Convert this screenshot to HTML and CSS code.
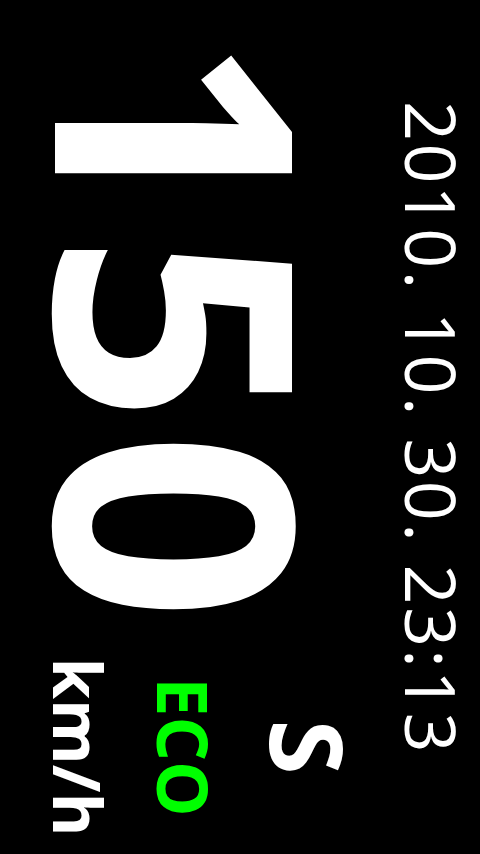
FILE: index.html
```html
<!DOCTYPE html>
<html>
<head>
<meta charset="utf-8">
<link rel="stylesheet" href="styles.css">
</head>
<body>
<div class="screen">
  <div class="date">2010. 10. 30. 23:13</div>
  <div class="main">
    <div class="speed">150</div>
    <div class="side">
      <div class="gear">S</div>
      <div class="eco">ECO</div>
      <div class="unit">km/h</div>
    </div>
  </div>
</div>
</body>
</html>
```
FILE: styles.css
```css
html, body {
  margin: 0;
  padding: 0;
  background: #000;
  width: 480px;
  height: 854px;
  overflow: hidden;
}
.screen {
  width: 854px;
  height: 480px;
  background: #000;
  color: #fff;
  font-family: "Open Sans", "DejaVu Sans", sans-serif;
  transform-origin: 0 0;
  transform: translateX(480px) rotate(90deg);
  display: flex;
  flex-direction: column;
}
.date {
  font-size: 70px;
  line-height: 1;
  padding-top: 13px;
  padding-left: 2px;
  letter-spacing: 2.4px;
  text-align: center;
  white-space: nowrap;
}
.main {
  display: flex;
  align-items: flex-start;
}
.speed {
  font-size: 332px;
  font-weight: 700;
  line-height: 1;
  margin-top: 47px;
  padding-left: 36px;
  letter-spacing: 8px;
  white-space: nowrap;
}
.side {
  margin-left: auto;
  margin-right: 7px;
  width: 200px;
  padding-top: 38px;
  display: flex;
  flex-direction: column;
  align-items: center;
  font-weight: 700;
  line-height: 1;
}
.gear {
  font-size: 100px;
}
.eco {
  font-size: 70px;
  color: #00ff00;
  margin-top: 40px;
}
.unit {
  font-size: 67px;
  margin-top: 37px;
}
```
